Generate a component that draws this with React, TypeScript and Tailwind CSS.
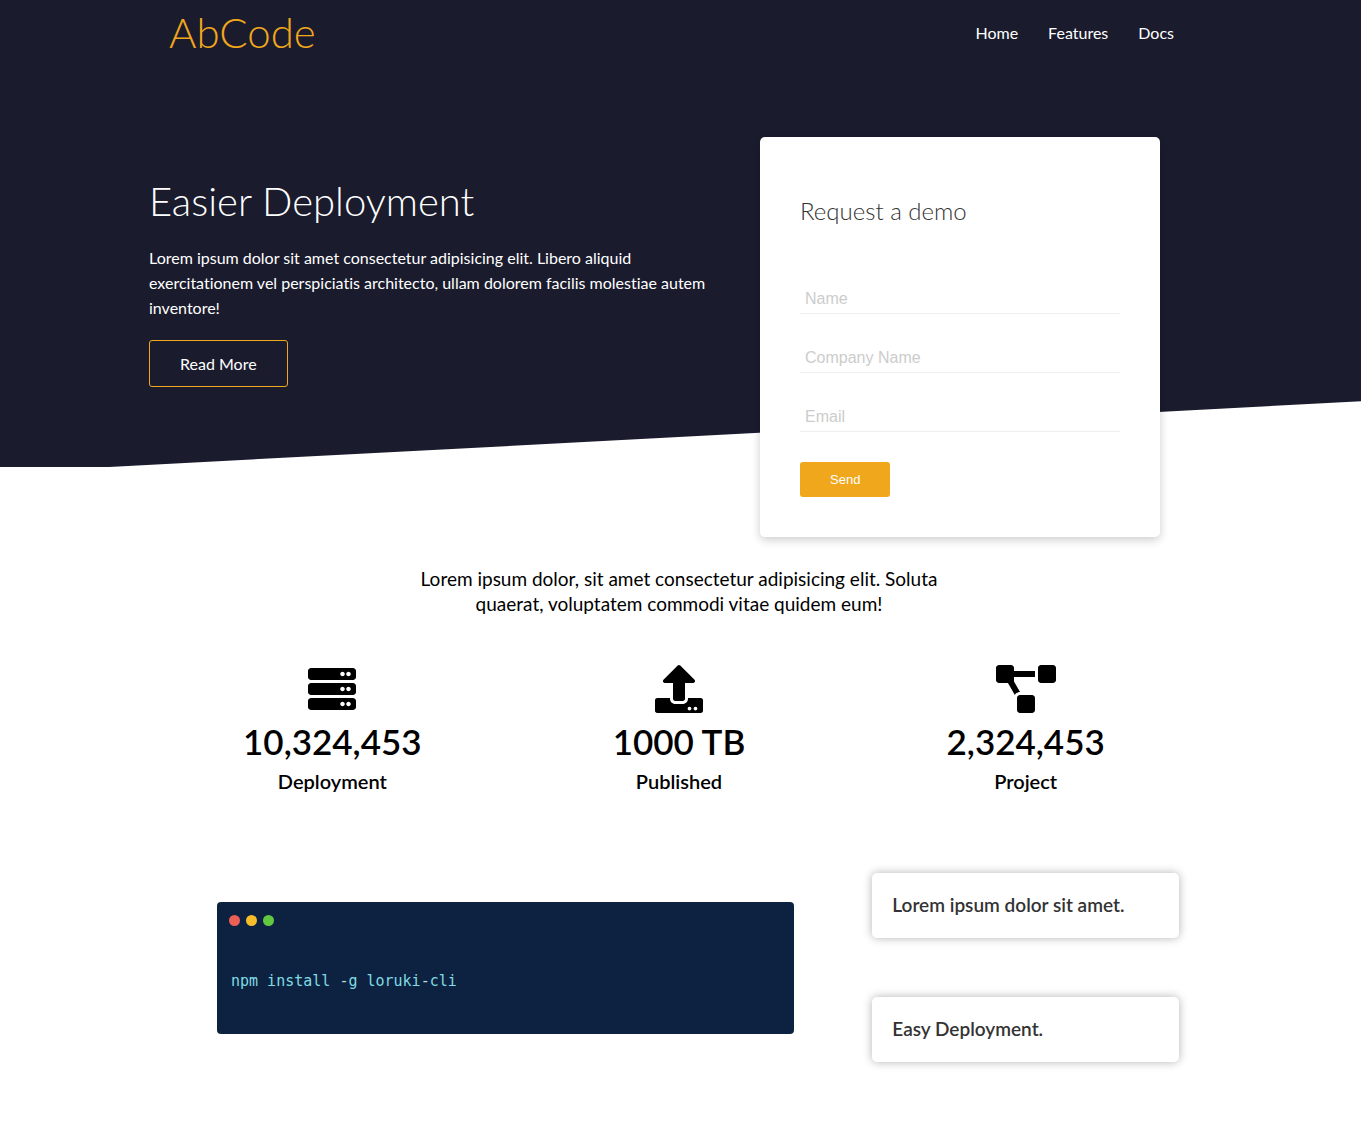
import type { ReactNode } from "react";
import { FaProjectDiagram, FaServer, FaUpload } from "react-icons/fa";

const links = ["Home", "Features", "Docs"];
const fields = [
  { id: "name", label: "Name", type: "text" },
  { id: "company", label: "Company Name", type: "text" },
  { id: "email", label: "Email", type: "email" },
];
const stats = [
  { icon: <FaServer className="h-12 w-12" />, value: "10,324,453", label: "Deployment" },
  { icon: <FaUpload className="h-12 w-12" />, value: "1000 TB", label: "Published" },
  { icon: <FaProjectDiagram className="h-12 w-15" />, value: "2,324,453", label: "Project" },
];

function Container({ children, className = "" }: { children: ReactNode; className?: string }) {
  return <div className={`mx-auto max-w-[1100px] ${className}`}>{children}</div>;
}

function Navbar() {
  return (
    <header className="bg-[#1a1b2d] pr-[3px] text-white">
      <Container className="flex items-center justify-between px-10 pb-[2px]">
        <a href="#" className="text-[42px] leading-[65px] font-light text-[#f0a71c]">AbCode</a>
        <nav className="flex">
          {links.map((l) => (
            <a key={l} href="#" className="mx-[5px] p-[10px] leading-[25px]">{l}</a>
          ))}
        </nav>
      </Container>
    </header>
  );
}

function DemoForm() {
  return (
    <form className="-mb-[70px] w-[400px] shrink-0 rounded-[5px] bg-white p-10 text-[#333] shadow-[0_3px_10px_rgba(0,0,0,0.2)]">
      <h2 className="mt-5 mb-[60px] text-2xl leading-7 font-light">Request a demo</h2>
      {fields.map((f) => (
        <div key={f.id} className="mb-[30px]">
          <input
            id={f.id}
            type={f.type}
            aria-label={f.label}
            placeholder={f.label}
            className="block h-[29px] w-full border-b border-[#eee] px-[5px] font-['Liberation_Sans',sans-serif] text-base outline-none placeholder:text-[#ccc]"
          />
        </div>
      ))}
      <button type="button" className="block h-[35px] rounded-[3px] bg-[#f0a71c] px-[30px] font-['Liberation_Sans',sans-serif] text-[13px] text-white">
        Send
      </button>
    </form>
  );
}

function Hero() {
  return (
    <section className="relative bg-[#1a1b2d] pt-[70px] pr-[3px] text-white">
      <div className="absolute inset-x-0 -bottom-[70px] h-[100px] -skew-y-3 bg-white" />
      <Container className="relative flex items-start gap-[50px] px-5">
        <div className="mt-10 max-w-[561px] flex-1">
          <h1 className="text-[40px] leading-12 font-light">Easier Deployment</h1>
          <p className="my-5 leading-[25px]">
            Lorem ipsum dolor sit amet consectetur adipisicing elit. Libero aliquid exercitationem vel
            perspiciatis architecto, ullam dolorem facilis molestiae autem inventore!
          </p>
          <a href="#" className="inline-block rounded-[3px] border border-[#f0a71c] px-[30px] py-[10px] leading-[25px]">
            Read More
          </a>
        </div>
        <DemoForm />
      </Container>
    </section>
  );
}

function Stats() {
  return (
    <section className="relative pt-[99px] pr-[3px] text-center">
      <Container className="px-10">
        <p className="mx-auto max-w-[530px] text-[19px] leading-[25px]">
          Lorem ipsum dolor, sit amet consectetur adipisicing elit. Soluta quaerat, voluptatem commodi
          vitae quidem eum!
        </p>
        <div className="mt-[49px] grid grid-cols-3 gap-5">
          {stats.map((s) => (
            <div key={s.label} className="flex flex-col items-center">
              {s.icon}
              <h3 className="mt-2 text-[35px] leading-10 font-semibold">{s.value}</h3>
              <p className="mt-2 mb-px text-xl leading-[25px] font-semibold">{s.label}</p>
            </div>
          ))}
        </div>
      </Container>
    </section>
  );
}

function Cli() {
  return (
    <section className="pt-[68px] pr-[3px] pb-[59px]">
      <Container className="grid grid-cols-3 items-center gap-5 px-10">
        <div className="col-span-2 mx-12 h-[132px] rounded-[4px] bg-[#0d2240] px-3 pt-[13px]">
          <div className="flex gap-[6px]">
            <span className="h-[11px] w-[11px] rounded-full bg-[#ec5f55]" />
            <span className="h-[11px] w-[11px] rounded-full bg-[#f5bd2c]" />
            <span className="h-[11px] w-[11px] rounded-full bg-[#62c83f]" />
          </div>
          <code className="mt-[45px] block pl-[2px] font-['DejaVu_Sans_Mono',monospace] text-[15px] leading-5 text-[#7fdbe3]">
            npm install <span className="text-[#c5d9d5]">-</span>g loruki<span className="text-[#c5d9d5]">-</span>cli
          </code>
        </div>
        <div className="flex flex-col gap-[59px] p-[10px] text-[#333]">
          {["Lorem ipsum dolor sit amet.", "Easy Deployment."].map((t) => (
            <h3 key={t} className="rounded-[5px] bg-white px-5 pt-[19px] pb-[21px] text-[19px] leading-[25px] font-semibold shadow-[0_0_10px_rgba(0,0,0,0.3)]">
              {t}
            </h3>
          ))}
        </div>
      </Container>
    </section>
  );
}

export default function App() {
  return (
    <main className="bg-white font-['Lato',sans-serif] text-base text-black [font-variant-ligatures:none]">
      <Navbar />
      <Hero />
      <Stats />
      <Cli />
    </main>
  );
}
